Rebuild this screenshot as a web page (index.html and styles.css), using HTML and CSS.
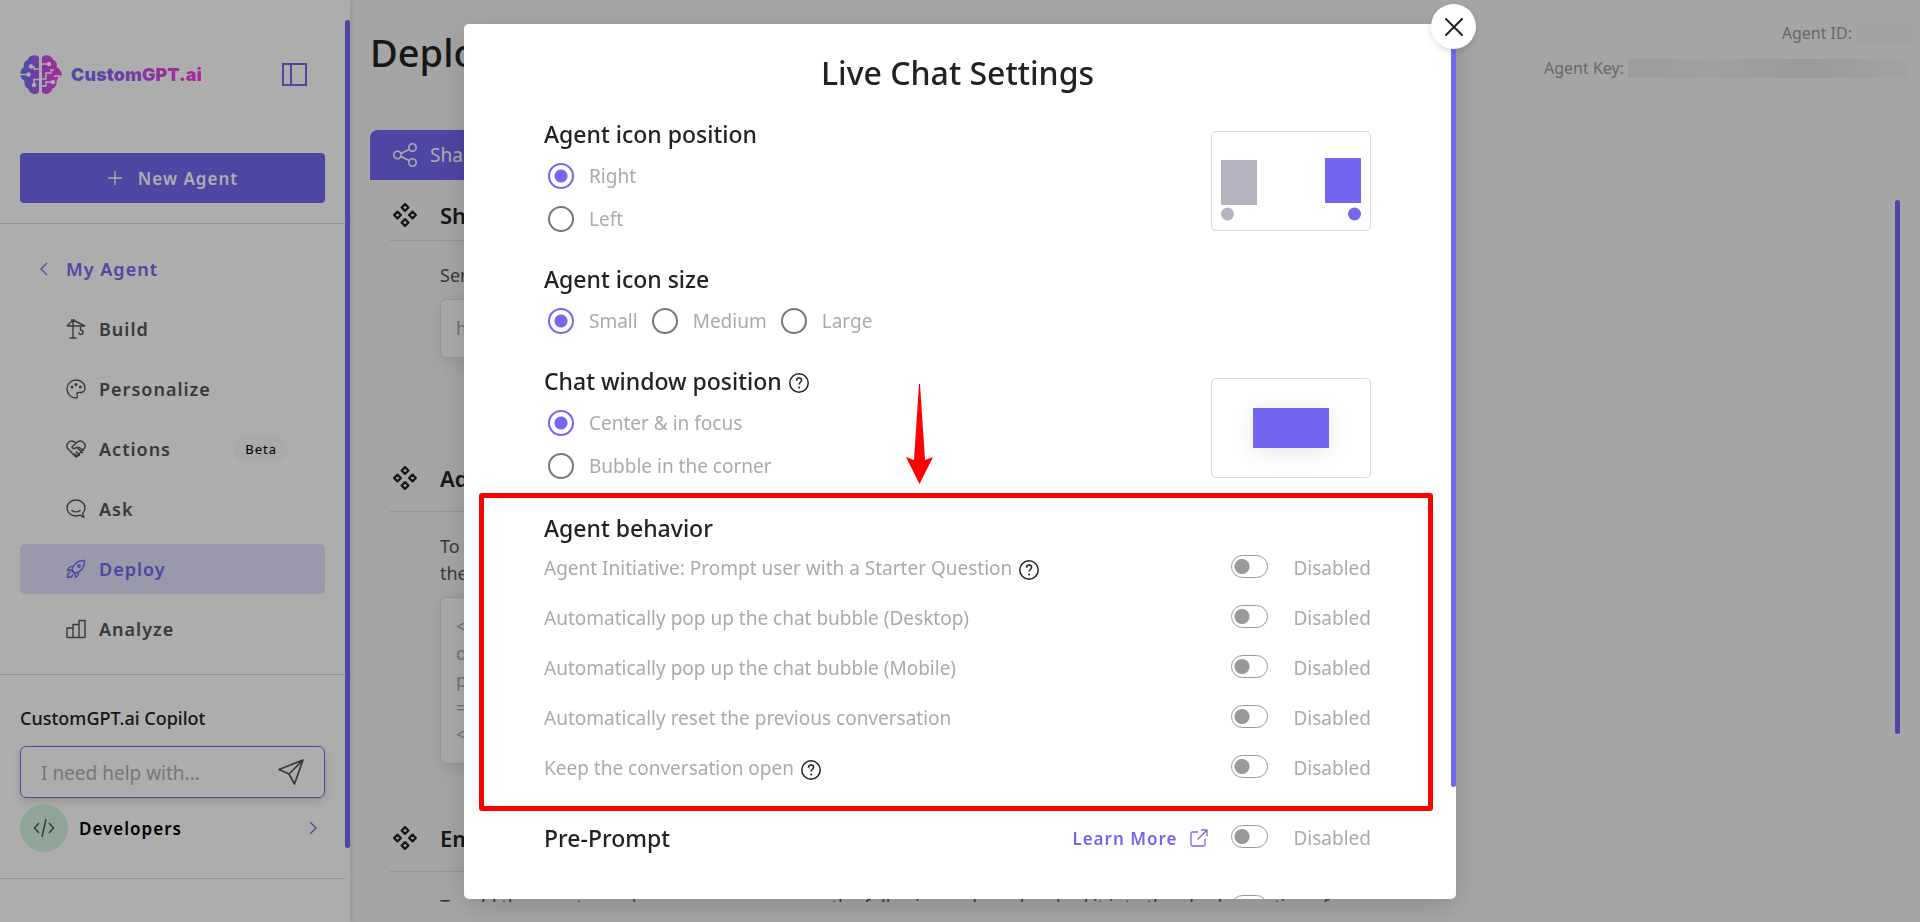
FILE: index.html
```html
<!DOCTYPE html>
<html lang="en">
<head>
  <meta charset="UTF-8">
  <meta name="viewport" content="width=device-width, initial-scale=1.0">
  <title>Deploy - CustomGPT.ai</title>
  <link rel="stylesheet" href="styles.css">
</head>
<body>

<!-- Shared icons -->
<svg class="sprite" aria-hidden="true">
  <symbol id="icon-diamonds" viewBox="0 0 24 24">
    <g fill="none" stroke="currentColor" stroke-width="2.200" stroke-linejoin="round">
      <path d="M12 1.100l3.400 3.400L12 7.900 8.600 4.500z"/>
      <path d="M12 16.100l3.400 3.400L12 22.900l-3.400-3.400z"/>
      <path d="M4.500 8.600L7.900 12l-3.400 3.400L1.100 12z"/>
      <path d="M19.500 8.600l3.400 3.400-3.400 3.400-3.400-3.400z"/>
    </g>
  </symbol>
  <symbol id="icon-help" viewBox="0 0 20 20">
    <g fill="none" stroke="currentColor" stroke-width="1.500">
      <circle cx="10" cy="10" r="9.200"/>
      <path d="M7.500 7.700C7.500 6 8.600 5 10.100 5s2.500 1 2.500 2.300c0 1.900-2.500 2.100-2.500 4.300"/>
    </g>
    <circle cx="10.100" cy="14.600" r="1" fill="currentColor"/>
  </symbol>
  <symbol id="icon-external" viewBox="0 0 18 18">
    <path d="M8 3H2.500A1.500 1.500 0 0 0 1 4.500v11A1.500 1.500 0 0 0 2.500 17h11a1.500 1.500 0 0 0 1.500-1.500V10M7.500 10.500L17 1M11 1h6v6" fill="none" stroke="currentColor" stroke-width="1.300"/>
  </symbol>
</svg>

<div class="layout">
  <!-- Sidebar -->
  <aside class="sidebar">
    <div class="sidebar-top">
      <div class="brand-row">
        <a href="#" class="brand">
          <svg class="brand-logo" viewBox="0 0 43 39" aria-hidden="true">
            <defs>
              <linearGradient id="brandGradient" x1="0" x2="1" y1="0" y2="0">
                <stop offset="0" stop-color="#6d73f5"/>
                <stop offset="1" stop-color="#ff3be6"/>
              </linearGradient>
            </defs>
            <path fill="url(#brandGradient)" d="M19 2C16-1 9-.500 7.500 5 4.500 6 3 9 4 12 1 14 0 17 .500 20c.300 3 2 5 4 6-.500 3 .500 6 3.500 7.500C9.500 39 16 41 19 37zM22 2C25-1 31.500-.500 33.500 5c3 1 4 4 3 7 3 1.500 4.500 4 5.500 8l-1 3-2-2.500-2.500 6c.500 3-1 6-4 7-1.500 5.500-7.500 7-10.500 3.500z"/>
            <g fill="none" stroke="#fff" stroke-width="1.500">
              <path d="M19 14h-5v-2h-3M0 19.500h8M19 24.500h-5v5M22 9h7M22 24h4v-6h5v-3h3M22 31h4v-4h6M42 21h-8"/>
            </g>
            <g fill="#fff">
              <circle cx="11" cy="11.500" r="2.200"/><circle cx="8.500" cy="19.500" r="2.200"/><circle cx="14" cy="30" r="2.200"/>
              <circle cx="29" cy="9" r="2.200"/><circle cx="33" cy="27" r="2.200"/>
            </g>
          </svg>
          <span class="brand-name">CustomGPT.ai</span>
        </a>
        <button class="collapse-btn" aria-label="Collapse menu">
          <svg width="25" height="23" viewBox="0 0 25 23" fill="none" stroke="currentColor" stroke-width="2">
            <path d="M1 1h23v21H1zM9 1v21"/>
          </svg>
        </button>
      </div>
      <button class="new-agent-btn">
        <svg width="16" height="16" viewBox="0 0 16 16" stroke="currentColor" stroke-width="1.300"><path d="M8 1v14M1 8h14"/></svg>
        New Agent
      </button>
    </div>

    <nav class="nav">
      <a href="#" class="nav-back">
        <svg width="8" height="14" viewBox="0 0 8 14" fill="none" stroke="currentColor" stroke-width="1.300"><path d="M7 1L1 7l6 6"/></svg>
        My Agent
      </a>
      <a href="#" class="nav-item">
        <svg class="nav-icon" viewBox="0 0 20 20"><path d="M1 7h18M1 7l6-6 12 6M7 1v18M3.500 19h7M5 1h4M14.500 7v4c2 0 2.500 1.200 2.500 2.200a2.200 2.200 0 0 1-4.400 0"/></svg>
        Build
      </a>
      <a href="#" class="nav-item">
        <svg class="nav-icon" viewBox="0 0 20 20"><path d="M10 19c-5 0-9-4-9-9s4-9 9-9 9 3.500 9 8c0 3-2.200 4.500-4.500 4.500h-2c-1.500 0-2 1-1.500 2.200.700 1.500.700 3.300-1 3.300z"/><g class="dots"><circle cx="6" cy="8" r="1.500"/><circle cx="10" cy="5.500" r="1.500"/><circle cx="14.300" cy="8" r="1.500"/></g></svg>
        Personalize
      </a>
      <a href="#" class="nav-item">
        <svg class="nav-icon" viewBox="0 0 20 20"><path d="M10 18L2.300 10.200C-1.500 5.500 4-1 10 4c6-5 11.500 1.500 7.700 6.200zM10 4L6 8c.500 2 3 2 4.500.300L17 14M14 16.500l-4-4M12 18l-3.500-3.500M11 8.500h2l5 3"/></svg>
        Actions
        <span class="badge">Beta</span>
      </a>
      <a href="#" class="nav-item">
        <svg class="nav-icon" viewBox="0 0 20 20"><path d="M16.500 14.500C18 13 19 11.200 19 9c0-4.500-4-8-9-8S1 4.500 1 9s4 8 9 8c1.500 0 2.800-.300 4-.800L18 18.500zM5.500 11c2 2.500 7 2.500 9 0"/></svg>
        Ask
      </a>
      <a href="#" class="nav-item active">
        <svg class="nav-icon" viewBox="0 0 20 20"><path d="M6 11C7 6 11 1 18.500 1.500 19 9 14 13 9 14.500zM7.500 7.500c-3-.500-5 1-6 4l5-.500M9 14.500l.500 4c2.500-1.500 3.500-3.500 3-6M4.500 13C2 13.500 1.500 16 1.500 18.500c2.500 0 5-.500 5.500-3M5 11l4 4"/><circle cx="13" cy="7" r="1.200"/></svg>
        Deploy
      </a>
      <a href="#" class="nav-item">
        <svg class="nav-icon" viewBox="0 0 20 20"><path d="M1 9h6v9.500H2A1 1 0 0 1 1 17.500zM7 5.500h6v13H7zM13 1.500h6v16a1 1 0 0 1-1 1h-5z"/></svg>
        Analyze
      </a>
    </nav>

    <div class="copilot">
      <label for="copilot-input">CustomGPT.ai Copilot</label>
      <div class="copilot-box">
        <input type="text" id="copilot-input" placeholder="I need help with...">
        <button class="send-btn" aria-label="Send">
          <svg width="26" height="26" viewBox="0 0 26 26" fill="none" stroke="currentColor" stroke-width="1.700" stroke-linejoin="round"><path d="M25 1L1 10.500l10 4.500 5.500 10zM25 1L11 15"/></svg>
        </button>
      </div>
      <a href="#" class="developers">
        <span class="dev-icon">
          <svg width="22" height="18" viewBox="0 0 22 18" fill="none" stroke="currentColor" stroke-width="1.500"><path d="M6 4L1.500 9 6 14M16 4l4.500 5-4.500 5M13 0L9 18"/></svg>
        </span>
        Developers
        <svg class="dev-arrow" width="8" height="14" viewBox="0 0 8 14" fill="none" stroke="currentColor" stroke-width="1.300"><path d="M1 1l6 6-6 6"/></svg>
      </a>
    </div>
    <span class="thumb sidebar-thumb"></span>
  </aside>

  <!-- Page content -->
  <main class="main">
    <header class="page-header">
      <h1>Deploy</h1>
      <dl class="agent-meta">
        <div><dt>Agent ID:</dt><dd class="masked masked-id"></dd></div>
        <div><dt>Agent Key:</dt><dd class="masked masked-key"></dd></div>
      </dl>
    </header>

    <div class="tabs">
      <button class="tab">
        <svg width="24" height="24" viewBox="0 0 24 24" fill="none" stroke="currentColor" stroke-width="1.600"><circle cx="4.500" cy="12" r="3.700"/><circle cx="19.500" cy="4.500" r="3.700"/><circle cx="19.500" cy="19.500" r="3.700"/><path d="M8 10.500l8-4M8 13.500l8 4"/></svg>
        Share
      </button>
    </div>

    <div class="deploy-list">
      <section class="deploy-item">
        <h2><svg width="24" height="24"><use href="#icon-diamonds"/></svg>Share</h2>
        <div class="deploy-body">
          <p>Send the link</p>
          <div class="code-box">https</div>
        </div>
      </section>
      <section class="deploy-item">
        <h2><svg width="24" height="24"><use href="#icon-diamonds"/></svg>Add</h2>
        <div class="deploy-body">
          <p>To add<br>the agent</p>
          <div class="code-box">&lt;<br>d<br>p<br>=<br>&lt;</div>
        </div>
      </section>
      <section class="deploy-item">
        <h2><svg width="24" height="24"><use href="#icon-diamonds"/></svg>Embed</h2>
        <div class="deploy-body">
          <p>To add the agent anywhere on your page, use the following code and embed it into the &lt;body&gt; section of</p>
        </div>
      </section>
    </div>
    <span class="thumb main-thumb"></span>
  </main>
</div>

<!-- Live chat settings -->
<div class="overlay">
  <div class="modal" role="dialog" aria-labelledby="modal-title">
    <button class="close-btn" aria-label="Close">
      <svg width="18" height="18" viewBox="0 0 18 18" stroke="currentColor" stroke-width="2" stroke-linecap="round"><path d="M1 1l16 16M17 1L1 17"/></svg>
    </button>
    <span class="thumb modal-thumb"></span>

    <form class="modal-body">
      <h2 id="modal-title">Live Chat Settings</h2>

      <div class="group">
        <fieldset>
          <legend>Agent icon position</legend>
          <label class="radio"><input type="radio" name="icon-position" checked>Right</label>
          <label class="radio"><input type="radio" name="icon-position">Left</label>
        </fieldset>
        <svg class="preview" viewBox="0 0 158 98" aria-hidden="true">
          <path fill="#b6b4c0" d="M9 28h36v45H9z"/><circle cx="15.500" cy="82" r="6.500" fill="#b6b4c0"/>
          <path fill="#7367f0" d="M113 26h36v45h-36z"/><circle cx="142.500" cy="82" r="6.500" fill="#7367f0"/>
        </svg>
      </div>

      <div class="group">
        <fieldset>
          <legend>Agent icon size</legend>
          <div class="radio-row">
            <label class="radio"><input type="radio" name="icon-size" checked>Small</label>
            <label class="radio"><input type="radio" name="icon-size">Medium</label>
            <label class="radio"><input type="radio" name="icon-size">Large</label>
          </div>
        </fieldset>
      </div>

      <div class="group">
        <fieldset>
          <legend>Chat window position<svg class="help"><use href="#icon-help"/></svg></legend>
          <label class="radio"><input type="radio" name="window-position" checked>Center &amp; in focus</label>
          <label class="radio"><input type="radio" name="window-position">Bubble in the corner</label>
        </fieldset>
        <div class="preview preview-center"><span></span></div>
      </div>

      <div class="behavior">
        <svg class="arrow-mark" viewBox="0 0 27 100" aria-hidden="true"><path fill="#f00" d="M13 0h1l5 76 8-3-13.500 27L0 73l8 3z"/></svg>
        <h3>Agent behavior</h3>
        <div class="setting">
          <label for="initiative">Agent Initiative: Prompt user with a Starter Question</label>
          <svg class="help"><use href="#icon-help"/></svg>
          <input type="checkbox" class="toggle" id="initiative"><span>Disabled</span>
        </div>
        <div class="setting">
          <label for="popup-desktop">Automatically pop up the chat bubble (Desktop)</label>
          <input type="checkbox" class="toggle" id="popup-desktop"><span>Disabled</span>
        </div>
        <div class="setting">
          <label for="popup-mobile">Automatically pop up the chat bubble (Mobile)</label>
          <input type="checkbox" class="toggle" id="popup-mobile"><span>Disabled</span>
        </div>
        <div class="setting">
          <label for="reset">Automatically reset the previous conversation</label>
          <input type="checkbox" class="toggle" id="reset"><span>Disabled</span>
        </div>
        <div class="setting">
          <label for="keep-open">Keep the conversation open</label>
          <svg class="help"><use href="#icon-help"/></svg>
          <input type="checkbox" class="toggle" id="keep-open"><span>Disabled</span>
        </div>
      </div>

      <div class="setting setting-main">
        <label for="pre-prompt">Pre-Prompt</label>
        <a href="#" class="learn-more">Learn More <svg width="18" height="18"><use href="#icon-external"/></svg></a>
        <input type="checkbox" class="toggle" id="pre-prompt"><span>Disabled</span>
      </div>
      <div class="setting setting-main setting-next">
        <a href="#" class="learn-more" aria-label="Learn more"><svg width="18" height="18"><use href="#icon-external"/></svg></a>
        <input type="checkbox" class="toggle" aria-label="Post-Prompt">
      </div>
    </form>
  </div>
</div>

</body>
</html>
```
FILE: styles.css
```css
* {
  box-sizing: border-box;
}

body {
  margin: 0;
  font-family: "Noto Sans", sans-serif;
  font-size: 18px;
  line-height: 27px;
  color: #222;
  overflow: hidden;
}

h1, h2, h3, p, dl, dd {
  margin: 0;
}

a {
  color: inherit;
  text-decoration: none;
}

button {
  font-family: inherit;
  border: none;
  background: none;
  padding: 0;
  cursor: pointer;
}

svg {
  display: block;
  flex-shrink: 0;
}

.sprite {
  display: none;
}

.thumb {
  position: absolute;
  right: 0;
  width: 5px;
  border-radius: 3px;
  background: #7367f0;
}

.layout {
  display: flex;
  height: 100vh;
  background: #f3f3f3;
}

/* Sidebar */
.sidebar {
  position: relative;
  width: 350px;
  flex-shrink: 0;
  padding-right: 5px;
  background: #fff;
  box-shadow: 0 0 6px rgba(0, 0, 0, 0.15);
}

.sidebar-thumb {
  top: 20px;
  height: 828px;
}

.sidebar-top {
  padding: 55px 20px 20px;
  border-bottom: 1px solid #dbdade;
}

.brand-row {
  display: flex;
  align-items: center;
  justify-content: space-between;
  padding-right: 18px;
  margin-bottom: 59px;
}

.brand {
  display: flex;
  align-items: center;
  gap: 8px;
}

.brand-logo {
  width: 43px;
  height: 39px;
}

.brand-name {
  font-family: Inter, sans-serif;
  font-size: 18px;
  font-weight: 900;
  background: linear-gradient(90deg, #6d73f5, #ff3be6);
  -webkit-background-clip: text;
  background-clip: text;
  color: transparent;
}

.collapse-btn {
  color: #7367f0;
}

.new-agent-btn {
  display: flex;
  align-items: center;
  justify-content: center;
  gap: 15px;
  width: 100%;
  height: 50px;
  border-radius: 4px;
  background: #7367f0;
  color: #fff;
  font-size: 17px;
  font-weight: 600;
  letter-spacing: 1px;
}

.nav {
  display: flex;
  flex-direction: column;
  gap: 10px;
  padding: 20px;
  border-bottom: 1px solid #dbdade;
}

.nav-back, .nav-item {
  display: flex;
  align-items: center;
  height: 50px;
  border-radius: 5px;
  font-weight: 600;
  letter-spacing: 1px;
}

.nav-back {
  gap: 18px;
  padding-left: 20px;
  color: #7367f0;
}

.nav-item {
  gap: 13px;
  padding-left: 46px;
  color: #555;
}

.nav-icon {
  width: 20px;
  height: 20px;
  fill: none;
  stroke: currentColor;
  stroke-width: 1.4;
  stroke-linejoin: round;
}

.nav-icon .dots {
  fill: currentColor;
  stroke: none;
}

.nav-item.active {
  background: #e3e1fc;
  color: #7367f0;
}

.badge {
  margin-left: auto;
  margin-right: 37px;
  padding: 0 11px 0 12px;
  border-radius: 13px;
  background: #f8fafa;
  color: #000;
  font-size: 13px;
  font-weight: 400;
  letter-spacing: 1px;
  line-height: 25px;
}

.copilot {
  padding: 30px 20px 26px;
  border-bottom: 1px solid #dbdade;
}

.copilot label {
  display: block;
  margin-bottom: 14px;
  font-weight: 500;
}

.copilot-box {
  display: flex;
  align-items: center;
  height: 52px;
  margin-bottom: 6px;
  padding: 0 20px;
  border: 1px solid #7367f0;
  border-radius: 6px;
  box-shadow: 0 3px 8px rgba(0, 0, 0, 0.15);
}

.copilot-box input {
  flex: 1;
  min-width: 0;
  padding: 2px 0 0;
  border: none;
  outline: none;
  background: none;
  font-family: inherit;
  font-size: 19px;
}

.copilot-box input::placeholder {
  color: #b0b0b0;
}

.send-btn {
  color: #555;
}

.developers {
  display: flex;
  align-items: center;
  gap: 11px;
  color: #000;
  font-size: 17px;
  font-weight: 600;
  letter-spacing: 1px;
}

.dev-icon {
  display: flex;
  align-items: center;
  justify-content: center;
  width: 48px;
  height: 48px;
  border-radius: 50%;
  background: #d3f4e0;
  color: #555;
}

.dev-arrow {
  margin-left: auto;
  margin-right: 8px;
  color: #7367f0;
}

/* Page content */
.main {
  position: relative;
  flex: 1;
  display: flex;
  flex-direction: column;
  min-width: 0;
  padding: 0 20px;
}

.main-thumb {
  top: 200px;
  right: 20px;
  height: 534px;
}

.page-header {
  display: flex;
  justify-content: space-between;
  height: 130px;
  padding-top: 20px;
  margin-right: -12px;
}

.page-header h1 {
  font-size: 38px;
  font-weight: 500;
  line-height: 64px;
}

.agent-meta {
  font-size: 16px;
  color: #999;
}

.agent-meta div {
  display: flex;
  align-items: center;
  justify-content: flex-end;
  gap: 4px;
  margin-bottom: 8px;
}

.masked {
  background: #efefef;
}

.masked-id {
  width: 56px;
  height: 22px;
}

.masked-key {
  width: 280px;
  height: 19px;
  margin-right: 4px;
  background: linear-gradient(90deg, #e6e6e6, #ececec 30%, #e3e3e3 65%, #f0f0f0);
}

.tabs {
  display: flex;
}

.tab {
  display: flex;
  align-items: center;
  gap: 13px;
  height: 50px;
  padding: 0 23px;
  border-radius: 8px 8px 0 0;
  background: #7367f0;
  color: #fff;
  font-size: 19px;
}

.deploy-list {
  flex: 1;
  min-height: 0;
  margin-bottom: 20px;
  padding: 22px 20px 0;
  overflow: hidden;
}

.deploy-item {
  max-width: 1020px;
  margin-bottom: 61px;
}

.deploy-item:first-child {
  margin-bottom: 107px;
}

.deploy-item h2 {
  display: flex;
  align-items: center;
  gap: 23px;
  padding: 0 3px 20px;
  border-bottom: 1px solid #dbdade;
  font-size: 22px;
  font-weight: 600;
  line-height: 26px;
}

.deploy-item:first-child h2 {
  padding-bottom: 12px;
}

.deploy-body {
  padding: 21px 0 0 50px;
}

.deploy-body p {
  margin-bottom: 10px;
  color: #555;
}

.code-box {
  padding: 15px;
  border: 1px solid #dbdade;
  border-radius: 6px;
  background: #fafafa;
  box-shadow: 0 4px 18px rgba(0, 0, 0, 0.1);
  color: #a8a5b0;
}

/* Modal */
.overlay {
  position: fixed;
  inset: 0;
  padding: 24px 0 23px;
  background: rgba(0, 0, 0, 0.32);
}

.modal {
  position: relative;
  width: 992px;
  max-width: 100%;
  height: 100%;
  margin: 0 auto;
  border-radius: 5px;
  background: #fff;
  box-shadow: 0 8px 30px rgba(0, 0, 0, 0.15);
}

.modal-thumb {
  top: 0;
  height: 763px;
}

.close-btn {
  position: absolute;
  z-index: 1;
  top: -20px;
  right: -20px;
  display: flex;
  align-items: center;
  justify-content: center;
  width: 45px;
  height: 45px;
  border-radius: 50%;
  background: #fff;
  color: #222;
  box-shadow: 0 2px 6px rgba(0, 0, 0, 0.15);
}

.modal-body {
  height: 100%;
  padding: 29px 85px 0 80px;
  overflow: hidden;
}

.modal-body h2 {
  margin-bottom: 26px;
  font-size: 32px;
  font-weight: 500;
  line-height: 40px;
  text-align: center;
}

.group {
  display: flex;
  justify-content: space-between;
  margin-bottom: 23px;
}

fieldset {
  margin: 0;
  padding: 0;
  border: none;
}

legend, .behavior h3 {
  padding: 0;
  font-size: 23px;
  font-weight: 500;
  line-height: 30px;
}

legend {
  display: flex;
  align-items: center;
  margin-bottom: 6px;
}

.help {
  width: 20px;
  height: 20px;
  margin: 4px 0 0 7px;
  color: #222;
}

.radio {
  display: flex;
  align-items: center;
  gap: 15px;
  height: 43px;
  padding-left: 4px;
  font-size: 19px;
  color: #aaa;
}

.radio-row {
  display: flex;
  gap: 10px;
}

.radio input {
  appearance: none;
  width: 26px;
  height: 26px;
  margin: 0 0 2px;
  border: 2px solid #777;
  border-radius: 50%;
}

.radio input:checked {
  border-color: #7367f0;
  background: radial-gradient(circle, #7367f0 6px, #fff 7px);
}

.preview {
  width: 160px;
  height: 100px;
  margin-top: 12px;
  border: 1px solid #dbdade;
  border-radius: 5px;
}

.preview-center {
  display: flex;
  align-items: center;
  justify-content: center;
}

.preview-center span {
  width: 76px;
  height: 40px;
  background: #7367f0;
  box-shadow: 0 4px 24px rgba(0, 0, 0, 0.1);
}

.behavior {
  position: relative;
  margin-top: 25px;
}

/* Highlight frame around the section */
.behavior::before {
  content: "";
  position: absolute;
  inset: -20px -62px -18px -65px;
  border: 5px solid #f00;
  border-radius: 3px;
  pointer-events: none;
}

.arrow-mark {
  position: absolute;
  bottom: calc(100% + 29px);
  left: 362px;
  width: 27px;
  height: 100px;
}

.setting {
  display: flex;
  align-items: center;
  height: 50px;
  font-size: 19px;
  color: #aaa;
}

.toggle {
  appearance: none;
  width: 37px;
  height: 23px;
  margin: 0 25px 3px auto;
  border: 1px solid #999;
  border-radius: 12px;
  background: radial-gradient(circle at 10px 50%, #999 7px, #fff 8px);
}

.setting-main {
  margin-top: 20px;
}

.setting-main label {
  font-size: 23px;
  font-weight: 500;
  color: #222;
}

/* Keeps the toggle column of rows without a status text */
.setting-next {
  padding-right: 78px;
}

.learn-more {
  display: flex;
  align-items: center;
  gap: 13px;
  margin-left: auto;
  color: #7367f0;
  font-size: 17px;
  font-weight: 600;
  letter-spacing: 1px;
}

.learn-more + .toggle {
  margin-left: 23px;
}
```
